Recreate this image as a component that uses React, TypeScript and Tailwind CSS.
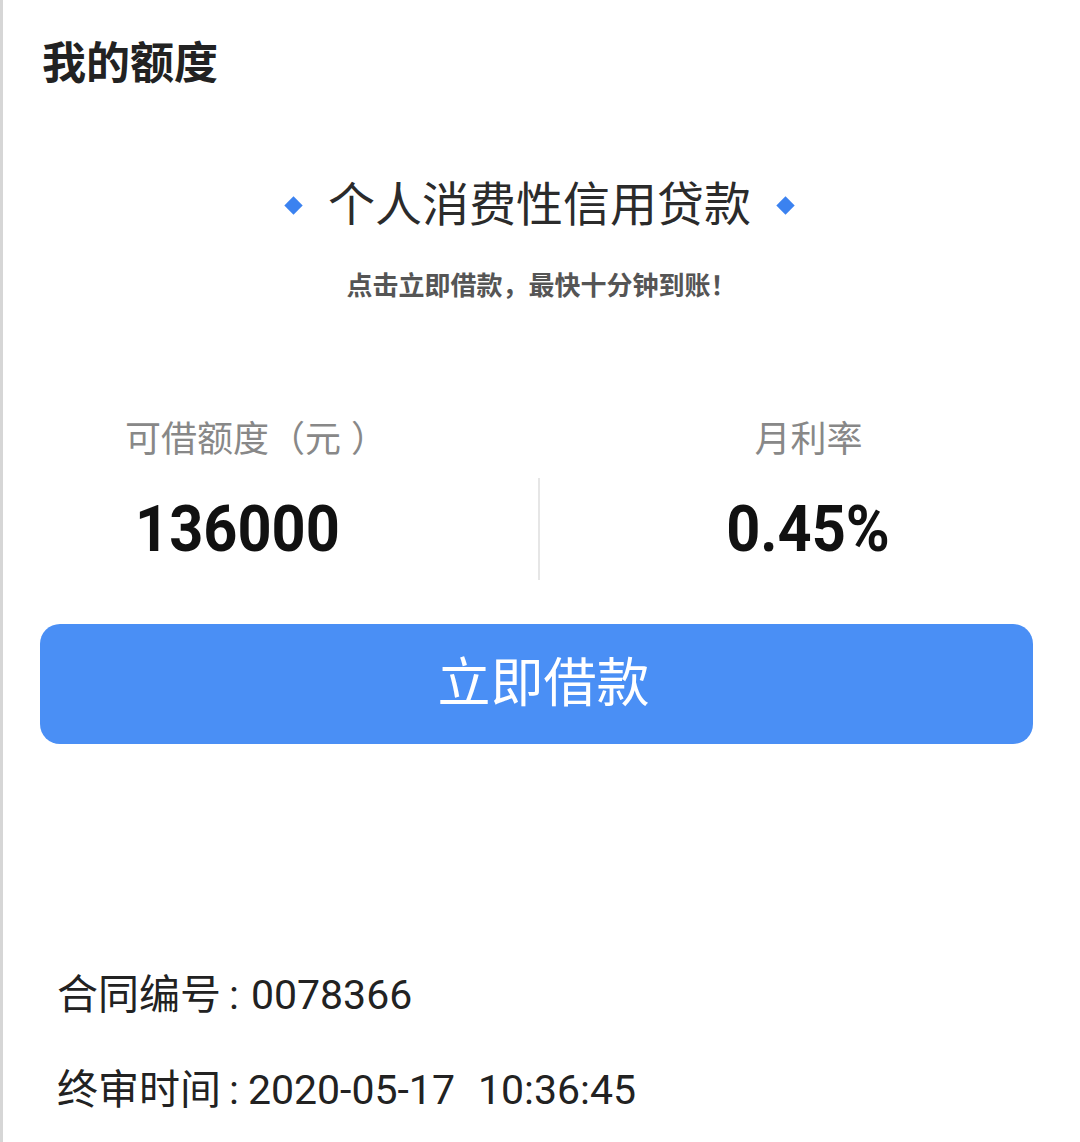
export default function App() {
  return (
    <div
      className="w-[1080px] h-[1142px] bg-white border-l-[3px] border-[#d6d6d6] overflow-hidden"
      style={{ fontFamily: 'Roboto, "Noto Sans CJK SC", sans-serif' }}
    >
      {/* Header */}
      <div className="pl-[39px] pt-[36px] text-[44px] leading-[56px] font-bold text-[#222]">
        我的额度
      </div>

      {/* Product title */}
      <div className="mt-[83px] flex items-center justify-center gap-[28px] pr-[4px]">
        <span className="w-[13px] h-[13px] rotate-45 bg-[#3b82f0]" />
        <span className="text-[47px] leading-[60px] text-[#2b2b2b]">个人消费性信用贷款</span>
        <span className="w-[13px] h-[13px] rotate-45 bg-[#3b82f0]" />
      </div>
      <div className="mt-[34px] text-center text-[26px] leading-[34px] font-bold text-[#555]">
        点击立即借款，最快十分钟到账！
      </div>

      {/* Stats */}
      <div className="mt-[115px] flex">
        <div className="w-[535px] pl-[122px]">
          <div className="text-[36px] leading-[44px] text-[#888]">
            可借额度（元<span className="ml-[10px]">）</span>
          </div>
          <div className="mt-[33px] ml-[10px] text-[64px] leading-[70px] font-bold text-[#111] origin-left scale-x-[0.93]">
            136000
          </div>
        </div>
        <div className="w-[2px] h-[102px] mt-[60px] bg-[#e6e6e6]" />
        <div className="flex-1 flex flex-col items-center pr-[3px]">
          <div className="text-[36px] leading-[44px] text-[#888]">月利率</div>
          <div className="mt-[33px] text-[64px] leading-[70px] font-bold text-[#111] scale-x-[0.93]">
            0.45%
          </div>
        </div>
      </div>

      {/* Button */}
      <div className="mt-[44px] ml-[37px] w-[993px] h-[120px] rounded-[20px] bg-[#4a8ff5] flex items-center justify-center pl-[14px]">
        <span className="text-[53px] leading-[60px] text-white">立即借款</span>
      </div>

      {/* Contract info */}
      <div className="mt-[226px] pl-[54px] text-[41px] leading-[50px] text-[#222]">
        合同编号<span className="ml-[8px] mr-[12px]">:</span>0078366
      </div>
      <div className="mt-[45px] pl-[54px] text-[41px] leading-[50px] text-[#222]">
        终审时间<span className="ml-[8px] mr-[9px]">:</span>2020-05-17
        <span className="ml-[23px]">10:36:45</span>
      </div>
    </div>
  );
}
